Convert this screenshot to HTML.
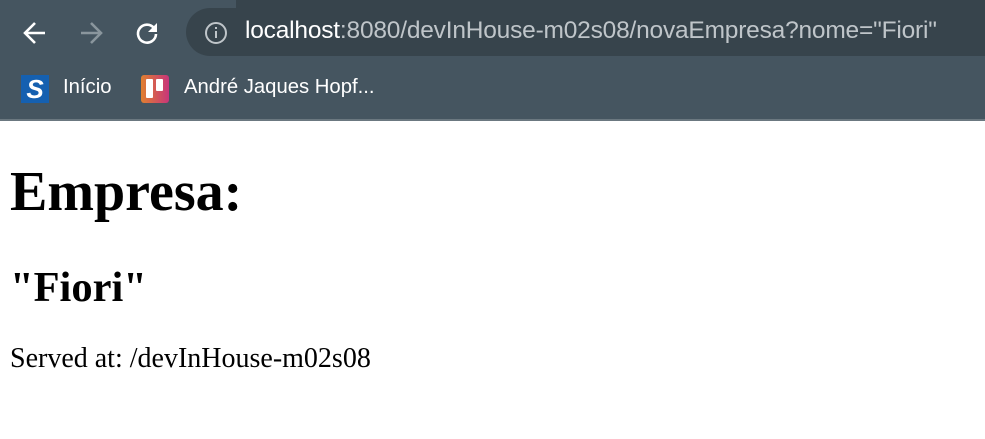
<!DOCTYPE html>
<html><head><meta charset="utf-8"><style>
*{margin:0;padding:0;box-sizing:border-box}
body{width:985px;height:439px;overflow:hidden;background:#fff;position:relative}
.top{position:absolute;left:0;top:0;width:985px;height:121px;background:#455560}
.tabstrip{position:absolute;left:0;top:0;width:985px;height:8px;background:#37444c}
.tabstrip .tab{position:absolute;left:0;top:0;width:236px;height:8px;background:#455560}
.addr{position:absolute;left:186px;top:8px;width:830px;height:48px;background:#37444c;border-radius:24px}
.url{position:absolute;left:245px;top:17px;font:24.5px "Liberation Sans",sans-serif;color:#bfc5c9;white-space:nowrap;letter-spacing:-0.2px}
.url b{font-weight:normal;color:#fff}
.bm{position:absolute;top:76px;font:20.3px "Liberation Sans",sans-serif;color:#fff}
.line{position:absolute;left:0;top:119px;width:985px;height:2px;background:#6b7880}
h1{position:absolute;left:10px;top:160px;font:bold 56px "Liberation Serif",serif;white-space:nowrap}
h2{position:absolute;left:10px;top:263px;font:bold 42.5px "Liberation Serif",serif;white-space:nowrap}
p{position:absolute;left:10px;top:343px;font:28px "Liberation Serif",serif;white-space:nowrap}
</style></head><body>
<div class="top">
<div class="tabstrip"><div class="tab"></div></div>
<svg style="position:absolute;left:22px;top:20px" width="26" height="26" viewBox="0 0 26 26"><path d="M23 13H4M13 3L3 13l10 10" stroke="#fff" stroke-width="2.6" fill="none"/></svg>
<svg style="position:absolute;left:78px;top:20px" width="26" height="26" viewBox="0 0 26 26"><path d="M3 13h19M13 3l10 10-10 10" stroke="#8a969d" stroke-width="2.6" fill="none"/></svg>
<svg style="position:absolute;left:134px;top:20px" width="26" height="26" viewBox="0 0 26 26"><path d="M20 8A9 9 0 1 0 22 14" stroke="#fff" stroke-width="2.6" fill="none"/><path d="M23 3v9h-9z" fill="#fff"/></svg>
<div class="addr"></div>
<svg style="position:absolute;left:204px;top:21px" width="24" height="24" viewBox="0 0 24 24"><circle cx="12" cy="12" r="10" stroke="#bfc5c9" stroke-width="2" fill="none"/><rect x="11" y="10" width="2" height="7" fill="#bfc5c9"/><rect x="11" y="6" width="2" height="2" fill="#bfc5c9"/></svg>
<div class="url"><b>localhost</b>:8080/devInHouse-m02s08/novaEmpresa?nome="Fiori"</div>
<div style="position:absolute;left:21px;top:75px;width:28px;height:28px;background:#1560b0;color:#fff;font:bold italic 26px 'Liberation Sans',sans-serif;text-align:center;line-height:28px">S</div>
<div class="bm" style="left:63px">Início</div>
<div style="position:absolute;left:141px;top:75px;width:28px;height:28px;border-radius:3px;background:linear-gradient(90deg,#e08030,#c8357a)"><div style="position:absolute;left:5px;top:4px;width:7px;height:19px;background:#fff;border-radius:1px"></div><div style="position:absolute;left:15px;top:4px;width:7px;height:12px;background:#fff;border-radius:1px"></div></div>
<div class="bm" style="left:184px">André Jaques Hopf...</div>
<div class="line"></div>
</div>
<h1>Empresa:</h1>
<h2>"Fiori"</h2>
<p>Served at: /devInHouse-m02s08</p>
</body></html>
